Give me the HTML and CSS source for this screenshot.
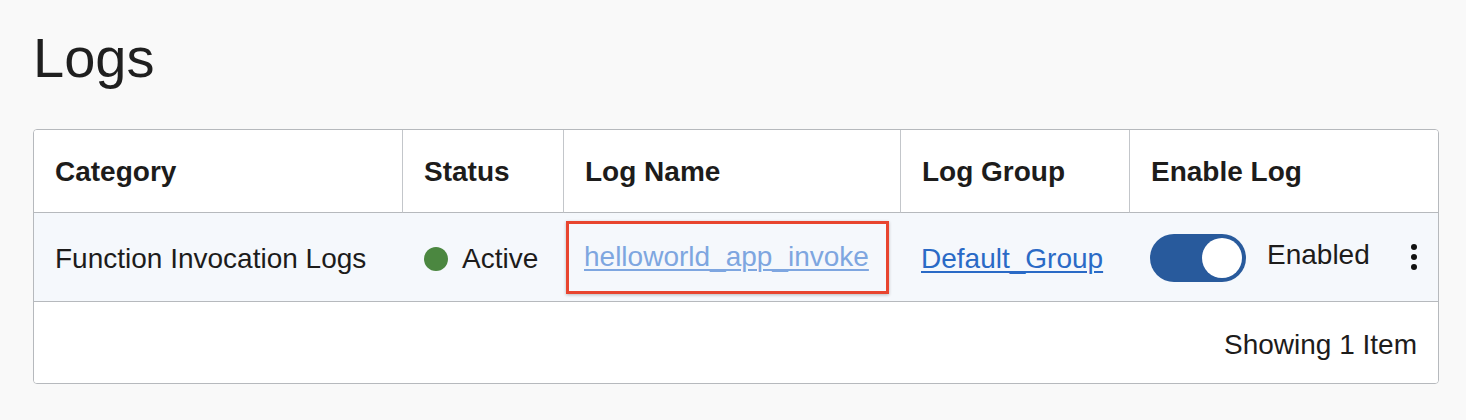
FILE: index.html
```html
<!DOCTYPE html>
<html lang="en">
<head>
<meta charset="utf-8">
<title>Logs</title>
<link rel="stylesheet" href="styles.css">
</head>
<body>
  <h1 class="title">Logs</h1>
  <div class="table">
    <div class="th first">Category</div>
    <div class="th">Status</div>
    <div class="th">Log Name</div>
    <div class="th">Log Group</div>
    <div class="th">Enable Log</div>

    <div class="td">Function Invocation Logs</div>
    <div class="td"><span class="dot"></span>Active</div>
    <div class="td"><span class="highlight"><a class="link visited" href="#">helloworld_app_invoke</a></span></div>
    <div class="td"><a class="link" href="#">Default_Group</a></div>
    <div class="td toggle-cell">
      <span class="switch"><span class="knob"></span></span>
      <span class="switch-label">Enabled</span>
      <span class="kebab"><i></i><i></i><i></i></span>
    </div>

    <div class="footer">Showing 1 Item</div>
  </div>
</body>
</html>
```
FILE: styles.css
```css
* { box-sizing: border-box; }
body {
  margin: 0;
  padding: 0 33px;
  background: #f9f9f9;
  font-family: "Liberation Sans", Arial, sans-serif;
  color: #1d1c1b;
  height: 420px;
  overflow: hidden;
}
.title {
  margin: 26px 0 39px;
  font-size: 56px;
  line-height: 64px;
  font-weight: 400;
  color: #1f1f1f;
}
.table {
  width: 1406px;
  border: 1px solid #b6b9bd;
  border-radius: 4px;
  overflow: hidden;
  background: #fff;
  display: grid;
  grid-template-columns: 368px 161px 337px 229px 1fr;
  grid-template-rows: 83px 89px 81px;
  font-size: 28px;
}
.th {
  display: flex;
  align-items: center;
  padding: 2px 21px 0;
  font-weight: 700;
  border-bottom: 1px solid #b6b9bd;
  border-left: 1px solid #c3c6ca;
  background: #fff;
}
.th.first { border-left: 0; }
.td {
  display: flex;
  align-items: center;
  padding: 3px 21px 0;
  background: #f5f8fc;
  border-bottom: 1px solid #b6b9bd;
  white-space: nowrap;
}
.dot {
  width: 24px;
  height: 24px;
  border-radius: 50%;
  background: #4b8740;
  margin: 0 14px 0 1px;
  flex: none;
}
.highlight {
  display: inline-block;
  margin-left: -18px;
  margin-top: -3px;
  padding: 17px 17px 18px 15px;
  border: 3px solid #e8452f;
  box-shadow: 0 1px 3px rgba(0,0,0,0.25);
}
.link {
  color: #2a6ac6;
  text-decoration: underline;
  text-underline-offset: 3px;
  text-decoration-thickness: 2px;
}
.link.visited { color: #7ea6e0; }
.toggle-cell { padding-right: 20px; }
.switch {
  width: 96px;
  height: 48px;
  border-radius: 24px;
  background: #285a9c;
  display: flex;
  align-items: center;
  justify-content: flex-end;
  padding-right: 4px;
  flex: none;
  margin-top: -2px;
}
.knob {
  width: 40px;
  height: 40px;
  border-radius: 50%;
  background: #fff;
}
.switch-label {
  margin-left: 21px;
  margin-top: -8px;
}
.kebab {
  margin-left: auto;
  display: flex;
  flex-direction: column;
  gap: 4px;
  margin-right: 1px;
  margin-top: -3px;
}
.kebab i {
  display: block;
  width: 6px;
  height: 6px;
  border-radius: 50%;
  background: #111;
}
.footer {
  grid-column: 1 / -1;
  display: flex;
  align-items: center;
  justify-content: flex-end;
  padding: 4px 21px 0 0;
  background: #fff;
}
```
